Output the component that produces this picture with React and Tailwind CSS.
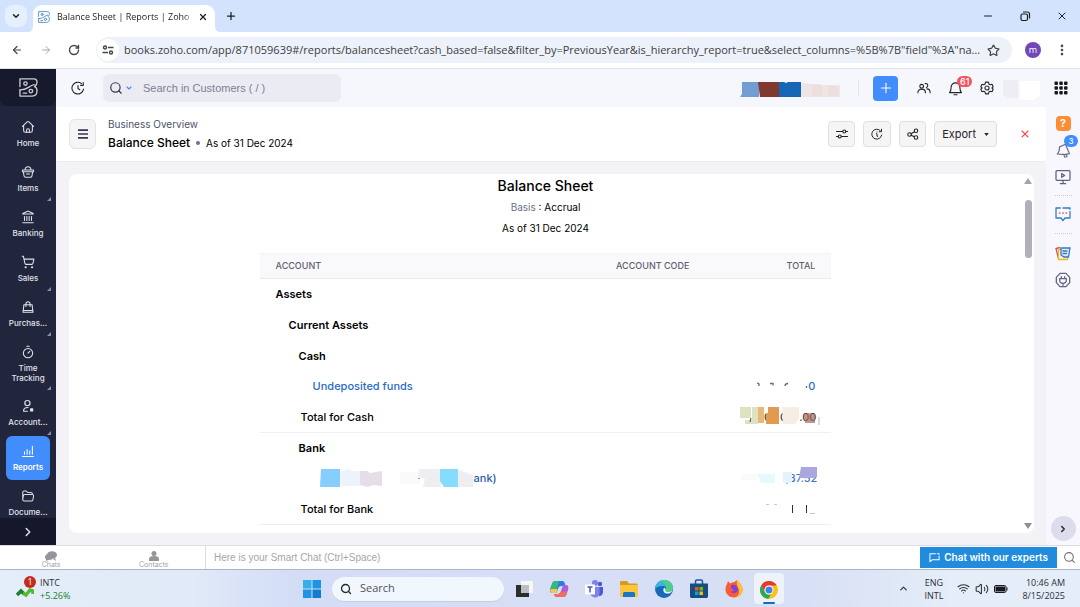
import React from "react";
import {
  ArrowLeft, ArrowRight, RotateCw, ChevronDown, ChevronUp, ChevronRight, X, Plus, Minus, Star,
  EllipsisVertical, Search, Menu, Landmark, ShoppingCart, Timer, Volume2, Wifi,
} from "lucide-react";

const ui = "font-['Open_Sans','Noto_Sans',sans-serif]";

function BooksLogo({ className }) {
  return (
    <svg viewBox="0 0 20 20" className={className} fill="none" stroke="currentColor" strokeWidth="1.4" strokeLinejoin="round" strokeLinecap="round">
      <path d="M1 9V1h14.500c2.200 0 3.500 1.300 3.500 3.500 0 2-1 3.500-2.600 4.600 1.700.8 2.600 2.200 2.600 4.300 0 3.500-2 5.600-5 5.600H1v-6.500" />
      <path d="M1 12.500c4 0 6.500-.8 9-2.600 2.200-1.600 4-2.700 6-3M4.500 16H8" />
      <circle cx="6.8" cy="5.8" r="1.8" />
      <circle cx="12.5" cy="13.8" r="1.9" />
    </svg>
  );
}

function Line({ children, className = "size-[14px]", sw = 1.8 }) {
  return (
    <svg viewBox="0 0 24 24" className={className} fill="none" stroke="currentColor" strokeWidth={sw} strokeLinecap="round" strokeLinejoin="round">
      {children}
    </svg>
  );
}

function TabStrip() {
  return (
    <div className={`flex h-8 shrink-0 items-end bg-[#d3e3fd] pl-[5px] text-[#1f1f1f] ${ui}`}>
      <button aria-label="Search tabs" className="mb-[5px] flex size-[22px] items-center justify-center rounded-lg bg-[#e6effe]">
        <ChevronDown className="size-[10px]" strokeWidth={3.5} />
      </button>
      <svg viewBox="0 0 6 6" className="size-[6px] fill-white"><path d="M6 0v6H0C4 6 6 4 6 0Z" /></svg>
      <div className="flex h-[27px] w-[182px] items-center rounded-t-[9px] bg-white pb-1 pl-[5px] pr-1">
        <BooksLogo className="size-3 shrink-0 text-[#3f83c4]" />
        <span className="ml-[7px] min-w-0 flex-1 whitespace-nowrap text-[9px] [mask-image:linear-gradient(90deg,#000_92%,transparent)]">Balance Sheet | Reports | Zoho</span>
        <button aria-label="Close tab" className="flex size-4 items-center justify-center"><X className="size-[10px]" strokeWidth={3} /></button>
      </div>
      <svg viewBox="0 0 6 6" className="size-[6px] fill-white"><path d="M0 0v6h6C2 6 0 4 0 0Z" /></svg>
      <button aria-label="New tab" className="mb-[10px] ml-[4px]"><Plus className="size-3" strokeWidth={2.5} /></button>
      <div className="mb-[10px] ml-auto flex items-center gap-[25px] pr-3">
        <button aria-label="Minimize"><Minus className="size-3" /></button>
        <button aria-label="Restore">
          <svg viewBox="0 0 12 12" className="size-3" fill="none" stroke="currentColor" strokeWidth="1.2"><rect x="2" y="4" width="6.5" height="6.5" rx="1.5" /><path d="M4 2h4.500a2 2 0 0 1 2 2v4.500" /></svg>
        </button>
        <button aria-label="Close"><X className="size-3" /></button>
      </div>
    </div>
  );
}

function AddressBar() {
  return (
    <div className={`flex h-[37px] shrink-0 items-center border-b border-[#dfe3ea] bg-white pl-[11px] pr-[11px] text-[#474747] ${ui}`}>
      <button aria-label="Back"><ArrowLeft className="size-3" strokeWidth={2.4} /></button>
      <button aria-label="Forward" className="ml-[17px] text-[#a5a7aa]"><ArrowRight className="size-3" strokeWidth={2} /></button>
      <button aria-label="Reload" className="ml-4"><RotateCw className="size-3" strokeWidth={2.8} /></button>
      <div className="ml-4 flex h-[26px] min-w-0 flex-1 items-center rounded-full bg-[#edf1fa] pl-[1px] pr-3">
        <button aria-label="Site information" className="flex size-[22px] shrink-0 items-center justify-center rounded-full bg-white">
          <svg viewBox="0 0 12 12" className="size-3" fill="none" stroke="currentColor" strokeWidth="1.4"><circle cx="3" cy="3.5" r="1.5" /><path d="M6 3.500h5.500M.5 8.500H6" /><circle cx="9" cy="8.5" r="1.5" /></svg>
        </button>
        <input aria-label="Address" readOnly className="ml-[5px] min-w-0 flex-1 text-ellipsis bg-transparent text-[11px] text-[#3c4043] outline-none" defaultValue={'books.zoho.com/app/871059639#/reports/balancesheet?cash_based=false&filter_by=PreviousYear&is_hierarchy_report=true&select_columns=%5B%7B"field"%3A"name"%2C"group"%3A"report"%7D'} />
        <button aria-label="Bookmark" className="ml-[6px]"><Star className="size-[13px]" strokeWidth={2.2} /></button>
      </div>
      <button aria-label="Profile" className="ml-[13px] flex size-4 items-center justify-center rounded-full bg-[#7347b8] text-[9px] text-white">m</button>
      <button aria-label="Browser menu" className="ml-[14px]"><EllipsisVertical className="size-[14px]" strokeWidth={2.5} /></button>
    </div>
  );
}

const navItems = [
  { label: "Home", icon: <Line><path d="m2.500 11 7.500-7.500a3 3 0 0 1 4 0l7.500 7.500M4.500 9.500V18a3 3 0 0 0 3 3h9a3 3 0 0 0 3-3V9.500" /><path d="M9.500 21v-3.500a2.500 2.500 0 0 1 5 0V21" /></Line> },
  { label: "Items", more: true, icon: <Line><path d="M2.500 8.500h19v3h-19zM4 11.500l1.200 7A3 3 0 0 0 8 21h8a3 3 0 0 0 2.800-2.500l1.200-7M7 8.500C7 5 9 3 12 3s5 2 5 5.500M9.500 15.500h5" /></Line> },
  { label: "Banking", icon: <Landmark className="size-[14px]" strokeWidth={1.8} /> },
  { label: "Sales", more: true, icon: <ShoppingCart className="size-[14px]" strokeWidth={1.8} /> },
  { label: "Purchas...", more: true, icon: <Line><path d="M5 8h14l1.500 13h-17z" /><path d="M8.500 11V6.500a3.500 3.500 0 0 1 7 0V11M3.800 18h16.400" /></Line> },
  { label: "Time\nTracking", more: true, icon: <Timer className="size-[14px]" strokeWidth={1.8} /> },
  { label: "Account...", more: true, icon: <Line sw={2}><circle cx="11" cy="7" r="4.5" /><path d="M11 21H4.500C4 16.500 6.500 14.500 12 14.500" /><path d="M16.500 17h3.500v3.500h-3.500z" fill="currentColor" /></Line> },
  { label: "Reports", active: true, icon: <Line><path d="M2.500 21.500h19M6 17.500v-4M10.500 17.500v-8M15 17.500v-6M19.500 17.500V4" /></Line> },
  { label: "Docume...", icon: <Line><path d="M3 18V6a2.500 2.500 0 0 1 2.500-2.500h3.500l2.500 2.500H17a2.500 2.500 0 0 1 2.500 2.500v1M3 18l1-6a2.500 2.500 0 0 1 2.500-2.500h13A2 2 0 0 1 21.500 12l-1 6a2.500 2.500 0 0 1-2.500 2.500H5.500A2.500 2.500 0 0 1 3 18Z" /></Line> },
];

function Sidebar() {
  return (
    <aside className="flex w-14 shrink-0 flex-col bg-[#21263c] text-[#e0e2ea]">
      <div className="flex h-[37px] shrink-0 items-center justify-center rounded-b-md bg-[#171a2c]">
        <BooksLogo className="size-[19px] text-[#c9ccd6]" />
      </div>
      <nav className="flex min-h-0 flex-1 flex-col gap-px overflow-hidden pt-[6px]">
        {navItems.map((n) => (
          <a key={n.label} href={`#${n.label}`} className={n.active
            ? "relative mx-[6px] flex h-11 shrink-0 flex-col items-center rounded-md bg-[#408dfb] pt-[7px] font-semibold text-white"
            : "relative mx-[6px] flex min-h-11 shrink-0 flex-col items-center pt-[7px] font-medium"}>
            <span className="flex h-4 items-center">{n.icon}</span>
            <span className="mt-[3px] whitespace-pre text-center text-[8px] leading-[10px]">{n.label}</span>
            {n.label.includes("\n") && <span className="h-[7px]" />}
            {n.more && <svg viewBox="0 0 4 4" className="absolute -right-px bottom-0 size-1 fill-[#8b8ea0]"><path d="M4 0v4H0Z" /></svg>}
          </a>
        ))}
      </nav>
      <button aria-label="Expand sidebar" className="flex h-[27px] shrink-0 items-center justify-center bg-[#15182a]">
        <ChevronRight className="size-[14px]" strokeWidth={2.5} />
      </button>
    </aside>
  );
}

function TopBar() {
  return (
    <header className="flex h-[38px] shrink-0 items-center bg-[#f6f7fd] pl-[15px] pr-3 text-[#212529]">
      <button aria-label="Recent">
        <Line className="size-[14px]" sw={1.9}><path d="M18 4.500A10 10 0 1 0 21.500 14" /><path d="M21 2.500v5h-4.500M12 8v5l3 2" /></Line>
      </button>
      <div className="ml-[18px] flex h-7 w-[238px] items-center rounded-md bg-[#ebebf4] pl-[6px]">
        <Search className="size-[14px] text-[#33364a]" strokeWidth={2} />
        <button aria-label="Search scope" className="ml-[2px] text-[#408dfb]"><ChevronDown className="size-2" strokeWidth={3.5} /></button>
        <input aria-label="Search in Customers" placeholder="Search in Customers ( / )" className="ml-[10px] min-w-0 flex-1 bg-transparent font-['Liberation_Sans',sans-serif] text-[11px] outline-none placeholder:text-[#7e8092]" />
      </div>
      <svg viewBox="0 0 100 18" className="ml-auto h-[18px] w-[100px]">
        <path fill="#719dd2" d="M2 3h17v15H0l2-3z" />
        <path fill="#80392f" d="M18 3h22v15H20z" />
        <path fill="#1765b5" d="M39 3h5l2 1 2-1h13v15H39z" />
        <path fill="#efe5e4" d="M61 4l22 2h17v12H61z" />
        <path fill="#ead8d3" d="M72 5h10v12H72zM88 7h10v10H88z" opacity=".4" />
      </svg>
      <span className="ml-[18px] h-4 w-px bg-[#e3e4ec]" />
      <button aria-label="Quick create" className="ml-[14px] flex size-[25px] items-center justify-center rounded bg-[#408dfb] text-white"><Plus className="size-4" strokeWidth={1.6} /></button>
      <button aria-label="Referral" className="ml-[19px]">
        <Line className="size-[14px]" sw={1.9}><circle cx="8" cy="9" r="3.2" /><path d="M1.500 20c0-4 2.500-6 6.500-6s6.500 2 6.500 6" /><path d="M14 4.500a3.300 3.300 0 1 1 2 6.500M17 13.500c3.500 0 5.500 2 5.500 6.500" /></Line>
      </button>
      <button aria-label="Notifications" className="relative ml-[17px]">
        <Line className="size-[15px]" sw={1.8}><path d="M2.500 18.500h19c-2-2-2.500-4-2.500-8.500a7 7 0 0 0-14 0c0 4.500-.5 6.500-2.500 8.500ZM9.500 22h5" /></Line>
        <span className="absolute -top-[5px] left-[9px] rounded-full bg-[#f2545f] px-[3px] text-[9px] font-medium leading-[11px] text-white">61</span>
      </button>
      <button aria-label="Settings" className="ml-[17px]">
        <Line className="size-[14px]" sw={1.9}><path d="m9.500 2-.7 3-2.300 1.300-3-.8L1.300 9.800l2.200 2.200-2.200 2.200 2.200 4.300 3-.8L8.800 19l.7 3h5l.7-3 2.300-1.300 3 .8 2.200-4.300-2.200-2.200 2.200-2.200-2.200-4.300-3 .8L15.200 5l-.7-3z" /><circle cx="12" cy="12" r="3.5" /></Line>
      </button>
      <svg viewBox="0 0 40 24" className="ml-2 h-6 w-10"><path fill="#ededf3" d="M1 4h15v18H6l-5-3z" /><path fill="#fff" d="M18 5h20v14l-6 5H18z" /></svg>
      <button aria-label="All apps" className="ml-3">
        <svg viewBox="0 0 14 14" className="size-[14px] fill-[#17181c]">
          {[0.5, 5.3, 10].map((y) => [0.5, 5.3, 10].map((x) => <rect key={`${x}-${y}`} x={x} y={y} width="3.5" height="3.5" rx="1" />))}
        </svg>
      </button>
    </header>
  );
}

const btn = "flex h-[26px] items-center justify-center rounded border border-[#dfdfe6] bg-[#f5f5f6] text-[#212529]";

function PageHeader() {
  return (
    <div className="flex h-[55px] shrink-0 items-center border-b border-[#ebebf1] bg-white pl-[13px] pr-[15px]">
      <button aria-label="Reports list" className="flex h-[30px] w-[27px] items-center justify-center rounded-md border border-[#e3e3e8] bg-[#f5f5f6] text-[#3a3553]">
        <svg viewBox="0 0 12 12" className="size-3" fill="none" stroke="currentColor" strokeWidth="1.7"><path d="M1 2.200h10M1 6h10M1 9.800h10" /></svg>
      </button>
      <div className="ml-3 pt-px">
        <div className="text-[10px] leading-4 text-[#4c526c]">Business Overview</div>
        <div className="flex items-center leading-[22px] text-black">
          <h1 className="text-[12px] font-medium">Balance Sheet</h1>
          <span className="mx-[6px] size-1 rounded-full bg-[#6c718a]" />
          <span className="text-[10px]">As of 31 Dec 2024</span>
        </div>
      </div>
      <div className="ml-auto flex items-center gap-2">
        <button aria-label="Customize report" className={`${btn} w-[27px]`}>
          <Line className="size-3" sw={2.2}><path d="M1 7h12M20 7h3M1 17h3M11 17h12" /><circle cx="16.5" cy="7" r="3" /><circle cx="7.5" cy="17" r="3" /></Line>
        </button>
        <button aria-label="Schedule report" className={`${btn} w-7`}>
          <Line className="size-3" sw={2}><path d="M18.500 5A10 10 0 1 0 21.500 14M21 2.500V7.500h-4.500M12 8v.2M11 11.500h1v5h1.500" /></Line>
        </button>
        <button aria-label="Share" className={`${btn} w-[27px]`}>
          <Line className="size-3" sw={2.2}><circle cx="5" cy="13" r="3.5" /><circle cx="18" cy="5.500" r="3.5" /><circle cx="18" cy="19" r="3.5" /><path d="m8 11.500 7-4M8.200 14.500l6.500 3" /></Line>
        </button>
        <button className={`${btn} gap-2 px-[7px] text-[11px]`}>
          Export
          <svg viewBox="0 0 6 4" className="h-[3px] w-[5px] fill-current"><path d="M0 0h6L3 4z" /></svg>
        </button>
      </div>
      <button aria-label="Close report" className="ml-[22px] text-[#f04c4c]"><X className="size-3" strokeWidth={2.2} /></button>
    </div>
  );
}

function Report() {
  const head = "h-[26px] border-b border-[#ebeaf2] px-4 text-[9px] font-medium text-[#5f6070]";
  const total = "h-[31px] border-b border-[#efeff3]";
  return (
    <div className="min-w-0 flex-1 text-black">
      <div className="text-center">
        <h2 className="text-[14px] font-medium leading-6">Balance Sheet</h2>
        <p className="text-[10px] leading-[18px]"><span className="text-[#6c718a]">Basis</span> : Accrual</p>
        <p className="text-[10px] leading-6">As of 31 Dec 2024</p>
      </div>
      <table className="mx-auto mt-[13px] w-3/5 border-separate border-spacing-0 text-[11px] font-medium">
        <thead className="bg-[#f9f9fb]">
          <tr>
            <th className={`${head} border-t border-t-[#f3f3f7] text-left`}>ACCOUNT</th>
            <th className={`${head} w-[120px] border-t border-t-[#f3f3f7] text-right`}>ACCOUNT CODE</th>
            <th className={`${head} w-[126px] border-t border-t-[#f3f3f7] text-right`}>TOTAL</th>
          </tr>
        </thead>
        <tbody>
          <tr className="font-semibold"><td colSpan={3} className="h-[31px] pl-4">Assets</td></tr>
          <tr className="font-semibold"><td colSpan={3} className="h-[31px] pl-[29px]">Current Assets</td></tr>
          <tr className="font-semibold"><td colSpan={3} className="h-[30px] pl-[39px]">Cash</td></tr>
          <tr className="text-[#2a6bc8]">
            <td className="h-[31px] pl-[53px]"><a href="#undeposited">Undeposited funds</a></td>
            <td />
            <td className="pr-4">
              <div className="flex items-center justify-end">
                <svg viewBox="0 0 54 10" className="h-[10px] w-[54px]" fill="none" stroke="#5a6a92" strokeWidth="1.3"><path d="M3 1l2 1v2M16 1.500h3v2M31 4c0-2 1-2.500 3-2.500M52.500 4v2" /></svg>
                <a href="#amount">0</a>
              </div>
            </td>
          </tr>
          <tr>
            <td className={`${total} pl-[41px]`}>Total for Cash</td>
            <td className={total} />
            <td className={`${total} pr-[11px]`}>
              <div className="relative flex items-center justify-end pr-1 text-[#44403c]">
                <span className="mr-[9px]">0</span><span className="mr-3">0</span><span>.00</span>
                <svg viewBox="0 0 80 18" className="absolute -top-[2px] right-0 h-[18px] w-20">
                  <path fill="#dfe2c1" d="M0 0h11v11H0zM12 0h6v17H5v-4h7z" /><path fill="#e9b878" d="M18 0h6v16h-6z" />
                  <path fill="#e19a4f" d="M28 0h11v17H26V6h2z" /><path fill="#f8ede3" d="M42 0h17v12l-4 5H43z" />
                  <path fill="#a9695a" opacity=".7" d="M64 8l4-2 7 1v9H65z" /><path stroke="#b8b8bd" d="M79 10v8" /><path stroke="#44403c" d="M11 11l-1 4" />
                </svg>
              </div>
            </td>
          </tr>
          <tr className="font-semibold"><td colSpan={3} className="h-[30px] pl-[39px]">Bank</td></tr>
          <tr className="text-[#2a5da8]">
            <td className="h-[31px] pl-[60px]">
              <a href="#bank" className="flex items-center">
                <svg viewBox="0 0 154 20" className="h-5 w-[154px]">
                  <path fill="#86ceff" d="M1 0h19v18H0z" /><path fill="#edf3fc" d="M20 3l8-3 5 2h7v15H21z" />
                  <path fill="#e5dee9" d="M40 2h7l3 2 12-2v15l-9-1-5 2-8-2z" /><path fill="#fafafb" d="M80 3h20v12H80z" />
                  <path fill="#eeeef1" d="M99 0h22v18h-18l2-8-7-2zM138 1l15 5v12h-15z" /><path fill="#86dcff" d="M120 0h18v18h-14l-4-6z" />
                  <path stroke="#9a9aa2" strokeWidth="1" d="M98 9.500h2" />
                </svg>
                <span>ank)</span>
              </a>
            </td>
            <td />
            <td className="pr-[14px]">
              <div className="relative flex justify-end text-[#3f78bd]">
                <a href="#bank-amount">,87.52</a>
                <svg viewBox="0 0 76 18" className="absolute -top-[3px] right-0 h-[18px] w-[76px]">
                  <path fill="#fafafa" d="M0 7h16v6H0z" /><path fill="#e4faff" d="M16 7h18v9H20z" /><path fill="#e2f5ff" d="M42 5h9v11h-9z" />
                  <path fill="#aaa6e0" d="M60 0h16v10l-4 1H58z" />
                </svg>
              </div>
            </td>
          </tr>
          <tr>
            <td className={`${total} pl-[41px]`}>Total for Bank</td>
            <td className={total} />
            <td className={`${total} pr-[15px]`}>
              <svg viewBox="0 0 52 10" className="ml-auto h-[10px] w-[52px]" fill="none" stroke="#2b2e45"><path stroke="#c9c9ce" d="M2 .5h3M10 .5h3M46 9.500h5" /><path d="M28.500 1v8M42.500 1v8" /></svg>
            </td>
          </tr>
        </tbody>
      </table>
    </div>
  );
}

function ToolRail() {
  return (
    <div className="flex w-[34px] shrink-0 flex-col items-center bg-[#f7f7fd] pt-[9px] text-[#5f6484]">
      <button aria-label="Help" className="flex size-[15px] items-center justify-center rounded bg-[#fb8d34] text-[11px] font-semibold text-white">?</button>
      <button aria-label="Announcements" className="relative mt-3">
        <Line className="size-[15px]" sw={1.8}><path d="M2 17.500c2.500-1.500 3.500-4.500 3.500-11L15 2l6.500 15-8 1.500c-4-.5-7-1-11.500-1ZM12.500 18.500l1.500 4 3.500-.5-.5-4" /></Line>
        <span className="absolute -right-[7px] -top-2 rounded-full bg-[#408dfb] px-1 text-[8px] font-medium leading-[12px] text-white">3</span>
      </button>
      <button aria-label="Videos" className="mt-[11px]">
        <Line className="size-4" sw={1.9}><rect x="1.5" y="2.5" width="21" height="14.5" rx="1.5" /><path d="M10 7v5.500l4.500-2.800zM12 17v4.500M8 22h8" /></Line>
      </button>
      <span className="mt-[10px] w-[17px] border-t border-dotted border-[#c9cad6]" />
      <button aria-label="Chat" className="mt-[10px]">
        <Line className="size-4" sw={1.9}><path stroke="#2f7fc4" d="M8 3H1.500v15H9l3 4 3-4h7.500V8M12 3h10.500v2" /><path stroke="#e55353" strokeWidth="2.6" d="M7 10.500h.1M12 10.500h.1M17 10.500h.1" /></Line>
      </button>
      <span className="mt-[11px] w-[17px] border-t border-dotted border-[#c9cad6]" />
      <button aria-label="Notes" className="mt-[11px]">
        <svg viewBox="0 0 16 16" className="size-4" fill="none" strokeWidth="1.3"><path stroke="#dd4b43" d="M3.500 13.500 1 3.500l4-1" /><path stroke="#e7b93c" fill="#fdf3cf" d="M3.500 4.500h9v10h-9z" /><path stroke="#3779c3" fill="#dcebfb" d="M6 3h9l-1.500 9H9L6 10z" /><path stroke="#3779c3" d="M7.500 6h5M7.500 8.500H12" /></svg>
      </button>
      <button aria-label="Integrations" className="mt-[11px]">
        <Line className="size-4" sw={1.9}><path d="M7.500 2h9L22 8v8l-5.500 6h-9L2 16V8z" /><path d="M7 10h10v2a5 5 0 0 1-10 0zM9.500 7v3M14.500 7v3M12 17v3" /></Line>
      </button>
      <button aria-label="Collapse panel" className="mb-1 mt-auto flex size-[25px] items-center justify-center rounded-full bg-[#dddced] text-[#22243a]"><ChevronRight className="size-[10px]" strokeWidth={3.5} /></button>
    </div>
  );
}

function SmartChat() {
  return (
    <div className="flex h-[25px] shrink-0 items-center border-b border-t border-b-[#a9b5c6] border-t-[#dcdce3] bg-white text-[#a3a3a8]">
      <div className="grid h-full w-[206px] grid-cols-2 border-r border-[#dddde0] text-[7px] leading-[8px]">
        <button className="flex flex-col items-center pt-[5px]">
          <svg viewBox="0 0 12 10" className="h-[10px] w-3 shrink-0 fill-[#949499]"><ellipse cx="7" cy="4" rx="5" ry="3.8" /><ellipse cx="4" cy="6" rx="4" ry="3" /><path d="M1 10V7l3 1.500zM11 10l-3-2 2-1z" /></svg>
          Chats
        </button>
        <button className="flex flex-col items-center pt-[5px]">
          <svg viewBox="0 0 10 10" className="size-[10px] shrink-0 fill-[#949499]"><circle cx="5" cy="2.5" r="2.5" /><path d="M0 10V8c0-2 2-3 5-3s5 1 5 3v2z" /></svg>
          Contacts
        </button>
      </div>
      <input aria-label="Smart Chat" placeholder="Here is your Smart Chat (Ctrl+Space)" className="min-w-0 flex-1 bg-transparent pl-2 font-['Liberation_Sans',sans-serif] text-[10px] outline-none placeholder:text-[#a6a6aa]" />
      <button className="flex h-[21px] items-center gap-1 bg-[#218cdd] px-[9px] text-[10px] font-semibold text-white">
        <Line className="size-[11px]" sw={2.2}><path d="M14 4H2v17l5-4h15V9M18 4h4v1" /></Line>
        Chat with our experts
      </button>
      <button aria-label="Search chats" className="ml-[6px] mr-[4px] text-[#707077]"><Search className="size-[13px]" /></button>
    </div>
  );
}

const apps = [
  ["Task view", <><path fill="#f6f6f7" d="M7 2h12v12H7z" /><path fill="#2d2d30" d="M2 6h13v12H2z" /><path fill="#bdbec2" d="M7 6h8v8H7z" /></>],
  ["Copilot", <><path fill="#2580e0" d="M6 2h7c2 0 2.500 1 3 3l.5 2h-4c-2 0-3 1-3.500 3L7.500 14H4c-3 0-3.500-2-2.800-4.500l2-5C4 3 4.500 2 6 2Z" /><path fill="#35b879" d="M2 8l1.500-4C4 2.500 5 2 6.500 2H10L8 10c-.6 2.500-1.500 3.500-4 4C1.500 14 .5 12 2 8Z" /><path fill="#f5c745" d="M1.500 10h7L7.500 14H4c-2.500 0-3.200-1.500-2.500-4Z" /><path fill="#b25bd9" d="M14 6h2.500c3 0 3.300 2 2.500 5l-1.500 4.500c-.7 1.700-1.500 2.500-3 2.500H8c-2 0-2.500-1-3-3h3.500c2 0 3-1 3.500-3z" /><path fill="#ef6d63" d="M5 15h3.500c2 0 3-1 3.400-2.500H18l-1 3c-.6 1.700-1.300 2.500-3 2.500H8c-1.800 0-2.500-1-3-3Z" /></>],
  ["Teams", <><circle cx="16" cy="5" r="2.2" fill="#5059c9" /><circle cx="11" cy="4" r="3" fill="#7b83eb" /><path fill="#5059c9" d="M13 8h6v5c0 2-1 4-4 4z" /><path fill="#7b83eb" d="M6 8h9.500v6c0 3-2 4.500-4.500 4.500S6 16 6 14z" /><path fill="#fff" d="M1 5.500h10v10H1z" /><path stroke="#4b53bc" strokeWidth="1.5" d="M3.500 8h5M6 8v5.500" /></>],
  ["File Explorer", <><path fill="#d99a1b" d="M1 3.500C1 2.500 1.500 2 2.500 2H8l2 2.500h7c1 0 1.500.5 1.500 1.500v3H1z" /><path fill="#fcc63c" d="M1 6h18v10.500c0 1-.5 1.500-1.500 1.500h-15c-1 0-1.500-.5-1.500-1.500z" /><path fill="#1976c5" d="M4 15c0-1.500.5-2 2-2h8c1.500 0 2 .5 2 2v3H4z" /></>],
  ["Edge", <><circle cx="10" cy="10" r="9" fill="#1769b8" /><path fill="#39b6df" d="M1 10c.3-5 4-9 9-9s9 3.500 9 7.500c0 3-2.500 4.500-5 4.500-2 0-3-1-2.500-2C13 9 11.500 7 8.500 7 5 7 2.500 8 1 10Z" /><path fill="#52cc8a" d="M10 1c5 0 9 3.500 9 7.500 0 3-2.500 4.500-5 4.500-2 0-3-1-2.500-2C13.500 8 12 3.500 6 2z" /><path fill="#eef7fc" d="M11.500 11c-.5 1 .5 2 2.500 2 1.500 0 3.500-.5 4.500-2-1 3-3.500 4-6 3.500-3-.5-4-3.500-2.500-5.500 1-.5 2 1 1.500 2Z" /></>],
  ["Microsoft Store", <><path fill="none" stroke="#1a5a96" strokeWidth="1.5" d="M6.500 5V2.500C6.500 1.500 7 1 8 1h4c1 0 1.500.5 1.500 1.500V5" /><path fill="#174e80" d="M1 4.500h18V17c0 1.500-.5 2-2 2H3c-1.500 0-2-.5-2-2z" /><path fill="#f25022" d="M6 8h3.500v3.500H6z" /><path fill="#7fba00" d="M10.500 8H14v3.500h-3.500z" /><path fill="#00a4ef" d="M6 12.500h3.500V16H6z" /><path fill="#ffb900" d="M10.500 12.500H14V16h-3.500z" /></>],
  ["Firefox", <><path fill="#fa5b36" d="M3 5l1-3 2 2.500C9 3 9.500 3.500 10.500 3L13 1c.5 2 5.500 3.500 5.500 9.500 0 5-4 8-8.500 8s-8.500-3.500-8.500-8C1.500 8 2 6.500 3 5Z" /><path fill="#ffc331" d="M13 1c0 2 6 3.500 5.500 10-.5 5-4 7.500-8 7.500 4-1.500 5-4 4.500-7.500-.5-3-3-4.500-2-10Z" /><path fill="#7d43d5" d="M7 6.500c2-1.500 6.500-.5 7 3.500s-5.500 5.500-7.500 2.500c2 0 2.500-.5 3.500-1.500L7 9z" /></>],
];

function Taskbar() {
  return (
    <footer className={`grid h-[37px] shrink-0 grid-cols-[1fr_auto_1fr] items-center bg-[linear-gradient(90deg,#e4eef8_0%,#e0eaf8_18%,#d3ddf6_27%,#d8e0f5_75%,#e4edf8_88%,#e4edf8_100%)] text-[#2b2f38] ${ui}`}>
      <div className="flex items-center pl-4">
        <div className="relative">
          <svg viewBox="0 0 18 18" className="size-[18px]" fill="none" strokeWidth="3.5"><path stroke="#1c7f2c" d="M1 15l4-4 3 3" /><path stroke="#55b832" d="M7 13l3 2 4-5 3 1v3" /></svg>
          <span className="absolute -top-[4px] left-2 size-3 rounded-full bg-[#c42b1c] text-center text-[9px] leading-3 text-white">1</span>
        </div>
        <div className="ml-[6px] text-[9px] font-medium leading-[13px]">
          <div>INTC</div>
          <div className="text-[#15802c]">+5.26%</div>
        </div>
      </div>
      <div className="flex items-center gap-[15px] pl-[6px]">
        <button aria-label="Start" className="-mr-[5px]">
          <svg viewBox="0 0 20 20" className="size-5"><path fill="#35aeea" d="M1 1h8.500v8.500H1z" /><path fill="#1d95e2" d="M10.500 1H19v8.500h-8.500zM1 10.500h8.500V19H1z" /><path fill="#0f7cd2" d="M10.500 10.500H19V19h-8.500z" /></svg>
        </button>
        <label className="-mr-[5px] flex h-6 w-[172px] items-center rounded-full bg-[#f2f6fd] pl-2 shadow-[0_1px_0_#c5cde0]">
          <Search className="size-3 text-[#23262d]" strokeWidth={2.6} />
          <input aria-label="Search Windows" placeholder="Search" className="ml-2 min-w-0 flex-1 bg-transparent text-[11px] outline-none placeholder:text-[#50545c]" />
        </label>
        {apps.map(([name, art]) => (
          <button key={name} aria-label={name}><svg viewBox="0 0 20 20" className="size-5" fill="none">{art}</svg></button>
        ))}
        <button aria-label="Chrome" className="-ml-[5px] flex h-[31px] w-[30px] flex-col items-center justify-end rounded bg-[#eef2fb]">
          <svg viewBox="0 0 20 20" className="size-5">
            <circle cx="10" cy="10" r="9" fill="#fbc116" /><path fill="#e33b2e" d="M2.200 5.500a9 9 0 0 1 15.600 0H10a4.500 4.500 0 0 0-4 6.500z" /><path fill="#2da94f" d="M2.200 5.500 6 12a4.500 4.500 0 0 0 6 2l-2.700 5A9 9 0 0 1 2.200 5.500Z" /><circle cx="10" cy="10" r="4.5" fill="#fff" /><circle cx="10" cy="10" r="3.5" fill="#3f80ec" />
          </svg>
          <span className="mt-[2px] h-[2px] w-3 rounded-full bg-[#1170bd]" />
        </button>
      </div>
      <div className="flex items-center justify-end pr-[15px] text-[9px] font-medium leading-[13px]">
        <ChevronUp className="size-[11px]" strokeWidth={2.5} />
        <div className="ml-[15px] text-center"><div>ENG</div><div>INTL</div></div>
        <Wifi className="ml-[14px] size-[13px]" />
        <Volume2 className="ml-[5px] size-[14px]" strokeWidth={1.8} />
        <svg viewBox="0 0 14 8" className="ml-[5px] h-2 w-[14px]"><rect x=".5" y=".5" width="11.5" height="7" rx="1.5" fill="none" stroke="#17191f" /><path fill="#17191f" d="M1.500 1.500h9.500v5H1.500zM12.500 2.500h1v3h-1z" /></svg>
        <div className="ml-[14px] text-right"><div>10:46 AM</div><div>8/15/2025</div></div>
      </div>
    </footer>
  );
}

export default function App() {
  return (
    <div className="flex h-screen flex-col overflow-hidden font-['Inter','Liberation_Sans',sans-serif]">
      <TabStrip />
      <AddressBar />
      <div className="flex min-h-0 flex-1">
        <Sidebar />
        <div className="flex min-w-0 flex-1 flex-col">
          <TopBar />
          <div className="flex min-h-0 flex-1">
            <main className="flex min-w-0 flex-1 flex-col bg-[#f2f2f7]">
              <PageHeader />
              <div className="flex min-h-0 flex-1 pb-3 pl-[13px] pr-3 pt-3">
                <section className="flex min-w-0 flex-1 overflow-hidden rounded-lg bg-white">
                  <Report />
                  <div className="flex w-3 shrink-0 flex-col items-center py-1">
                    <svg viewBox="0 0 8 6" className="h-[6px] w-2 fill-[#a3a3aa]"><path d="M4 0l4 6H0z" /></svg>
                    <span className="mt-4 h-[58px] w-[7px] rounded-full bg-[#b0afbb]" />
                    <svg viewBox="0 0 8 6" className="mt-auto h-[6px] w-2 fill-[#8d8d94]"><path d="M0 0h8L4 6z" /></svg>
                  </div>
                </section>
              </div>
            </main>
            <ToolRail />
          </div>
        </div>
      </div>
      <SmartChat />
      <Taskbar />
    </div>
  );
}
